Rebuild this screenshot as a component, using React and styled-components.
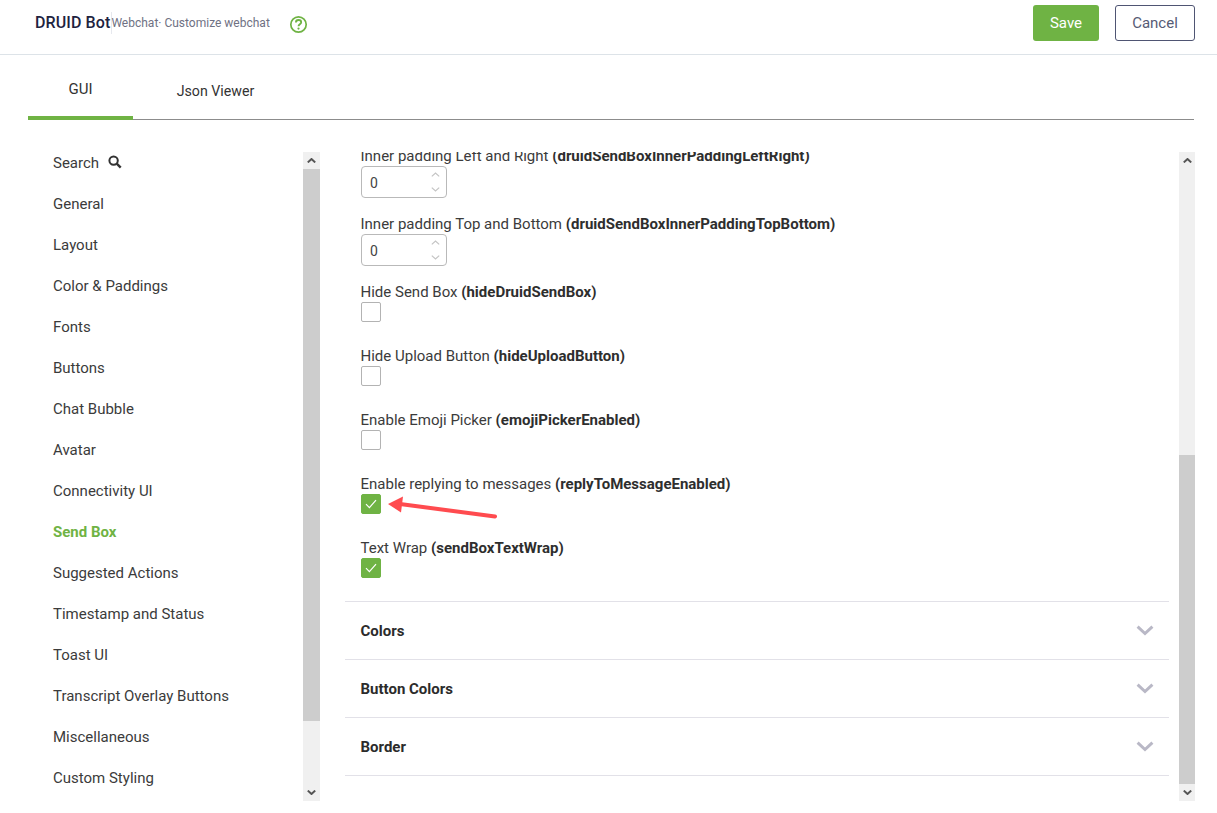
import React from "react";
import styled, { createGlobalStyle } from "styled-components";

const Global = createGlobalStyle`
  html, body { margin: 0; padding: 0; background: #fff; }
  body { font-family: Roboto, "Liberation Sans", sans-serif; overflow: hidden; }
  * { box-sizing: border-box; }
`;
const Page = styled.div`
  width: 1217px; height: 813px; display: flex; flex-direction: column; position: relative; overflow: hidden; color: #333;
`;
const Header = styled.header`
  height: 55px; flex: none; display: flex; align-items: flex-start; border-bottom: 1px solid #dde3e8; padding: 5px 22px 0 35px;
`;
const Brand = styled.div`
  font-size: 16px; font-weight: 500; color: #1e2340; line-height: 36px; width: 76px; white-space: nowrap; letter-spacing: .1px;
`;
const Sub = styled.div`
  font-size: 12px; color: #6f7183; line-height: 36px; border-left: 1px solid #e6e8ee; height: 22px; margin-top: 7px; display: flex; align-items: center; white-space: nowrap; text-indent: -.6px;
`;
const Help = styled.svg`
  width: 19px; height: 19px; margin: 10px 0 0 19px; flex: none;
`;
const Spacer = styled.div`flex: 1;`;
const Save = styled.button`
  width: 66px; height: 36px; border: none; border-radius: 3px; background: #6fb344; color: #fff; font: 400 15px Roboto, sans-serif; padding: 0;
`;
const Cancel = styled.button`
  width: 80px; height: 36px; margin-left: 16px; border: 1px solid #4f5573; border-radius: 3px; background: #fff; color: #565b75; font: 400 15px Roboto, sans-serif; padding: 0;
`;
const Tabs = styled.nav`
  height: 65px; margin: 0 23px 0 28px; flex: none; display: flex; border-bottom: 1px solid #8c8c8c;
`;
const Tab = styled.div`
  height: 65px; width: ${p => p.$w}px; text-align: center; font-size: ${p => p.$active ? 15 : 14.2}px; color: #333;
  line-height: ${p => p.$active ? 68 : 72}px;
  border-bottom: ${p => p.$active ? "4px solid #6fb344" : "none"};
  flex: none;
`;
const Body = styled.div`
  flex: 1; min-height: 0; display: flex; padding: 32px 23px 12px 28px;
`;
const SideWrap = styled.div`
  width: 292px; flex: none; display: flex;
`;
const SideList = styled.ul`
  list-style: none; margin: 0; padding: 0 0 0 25px; flex: 1; min-width: 0;
`;
const SideItem = styled.li`
  height: 41px; line-height: 22px; font-size: 15px; color: ${p => p.$active ? "#6fb344" : "#3b3b3b"}; font-weight: ${p => p.$active ? 700 : 400}; display: flex; gap: 9px; align-items: flex-start; white-space: nowrap;
`;
const SearchIcon = styled.svg`
  width: 14px; height: 14px; margin-top: 3px; flex: none;
`;
const Scroll = styled.div`
  width: ${p => p.$w}px; flex: none; background: #f0f0f0; display: flex; flex-direction: column; height: 649px;
`;
const ScrollBtn = styled.div`
  height: 17px; flex: none; display: flex; align-items: center; justify-content: center;
`;
const ScrollTrack = styled.div`
  flex: 1; min-height: 0; display: flex; flex-direction: column;
`;
const Gap = styled.div`height: ${p => p.$h}px; flex: none;`;
const Thumb = styled.div`height: ${p => p.$h}px; flex: none; background: #cdcdcd;`;
const Main = styled.main`
  width: 824px; margin: 0 10px 0 25px; height: 649px; overflow: hidden; flex: none;
`;
const MainInner = styled.div`margin-top: -5px;`;
const Fields = styled.div`
  padding: 0 0 0 15.5px; height: 455px; border-bottom: 1px solid #e2e1e8;
`;
const Field = styled.div`
  height: ${p => p.$h}px;
`;
const Label = styled.div`
  font-size: 15px; line-height: 18px; color: #3b3b3b; white-space: nowrap;
  b { font-weight: 700; color: #2e2e2e; }
`;
const NumBox = styled.div`
  width: 86px; height: 32px; margin: 1px 0 0 .5px; border: 1px solid #b9b9b9; border-radius: 4px; display: flex; align-items: center; justify-content: space-between; padding: 1px 6px 0 8px; font-size: 14px; color: #444;
`;
const Spin = styled.div`
  display: flex; flex-direction: column; gap: 10px; margin-top: -1px;
`;
const Check = styled.div`
  width: 20px; height: 20px; margin: 1px 0 0 .5px; border-radius: 2px; border: 1px solid ${p => p.$on ? "#6fb344" : "#b3b3b3"}; background: ${p => p.$on ? "#6fb344" : "#fff"}; display: flex; align-items: center; justify-content: center;
`;
const Accordion = styled.div`
  height: 58px; padding: 0 15px 0 15.5px; border-bottom: 1px solid #e2e1e8; display: flex; align-items: center; justify-content: space-between; font-size: 15px; font-weight: 700; color: #2b2b2b;
`;
const Arrow = styled.svg`
  position: absolute; left: 380px; top: 490px; width: 130px; height: 40px; pointer-events: none;
`;

const Up = ({ c = "#555", w = 9, h = 5, sw = 2 }) => (
  <svg width={w} height={h} viewBox="0 0 9 5" fill="none"><path d="M.8 4.4 4.5 1l3.7 3.4" stroke={c} strokeWidth={sw} /></svg>
);
const Down = ({ c = "#555", w = 9, h = 5, sw = 2 }) => (
  <svg width={w} height={h} viewBox="0 0 9 5" fill="none"><path d="M.8.6 4.5 4l3.7-3.4" stroke={c} strokeWidth={sw} /></svg>
);
const Tick = () => (
  <svg width="12" height="10" viewBox="0 0 12 10" fill="none"><path d="M1 5.2 4.4 8.6 11 1.2" stroke="#fff" strokeWidth="1.2" /></svg>
);
const Num = () => (
  <NumBox>
    0
    <Spin><Up c="#c4c4c4" w={9} h={5} sw={1.2} /><Down c="#c4c4c4" w={9} h={5} sw={1.2} /></Spin>
  </NumBox>
);

const nav = ["General","Layout","Color & Paddings","Fonts","Buttons","Chat Bubble","Avatar","Connectivity UI","Send Box","Suggested Actions","Timestamp and Status","Toast UI","Transcript Overlay Buttons","Miscellaneous","Custom Styling"];

export default function App() {
  return (
    <Page>
      <Global />
      <Header>
        <Brand>DRUID Bot</Brand>
        <Sub>Webchat· Customize webchat</Sub>
        <Help viewBox="0 0 19 19" fill="none">
          <circle cx="9.5" cy="9.5" r="7.7" stroke="#6fb344" strokeWidth="1.7" />
          <path d="M6.9 7.4c0-1.5 1.1-2.4 2.6-2.4s2.7.9 2.7 2.3c0 2-2.7 2-2.7 4" stroke="#6fb344" strokeWidth="1.8" />
          <circle cx="9.5" cy="13.6" r="1.1" fill="#6fb344" />
        </Help>
        <Spacer />
        <Save>Save</Save>
        <Cancel>Cancel</Cancel>
      </Header>
      <Tabs>
        <Tab $active $w={105}>GUI</Tab>
        <Tab $w={165}>Json Viewer</Tab>
      </Tabs>
      <Body>
        <SideWrap>
          <SideList>
            <SideItem>Search
              <SearchIcon viewBox="0 0 14 14" fill="none">
                <circle cx="5.6" cy="5.6" r="4.2" stroke="#333" strokeWidth="2" />
                <path d="m8.7 8.7 4 4" stroke="#333" strokeWidth="2.4" />
              </SearchIcon>
            </SideItem>
            {nav.map(n => <SideItem key={n} $active={n === "Send Box"}>{n}</SideItem>)}
          </SideList>
          <Scroll $w={17}>
            <ScrollBtn><Up /></ScrollBtn>
            <ScrollTrack><Thumb $h={552} /></ScrollTrack>
            <ScrollBtn><Down /></ScrollBtn>
          </Scroll>
        </SideWrap>
        <Main>
          <MainInner>
            <Fields>
              <Field $h={68}><Label>Inner padding Left and Right <b>(druidSendBoxInnerPaddingLeftRight)</b></Label><Num /></Field>
              <Field $h={68}><Label>Inner padding Top and Bottom <b>(druidSendBoxInnerPaddingTopBottom)</b></Label><Num /></Field>
              <Field $h={64}><Label>Hide Send Box <b>(hideDruidSendBox)</b></Label><Check /></Field>
              <Field $h={64}><Label>Hide Upload Button <b>(hideUploadButton)</b></Label><Check /></Field>
              <Field $h={64}><Label>Enable Emoji Picker <b>(emojiPickerEnabled)</b></Label><Check /></Field>
              <Field $h={64}><Label>Enable replying to messages <b>(replyToMessageEnabled)</b></Label><Check $on><Tick /></Check></Field>
              <Field $h={50}><Label>Text Wrap <b>(sendBoxTextWrap)</b></Label><Check $on><Tick /></Check></Field>
            </Fields>
            {["Colors","Button Colors","Border"].map(t => (
              <Accordion key={t}>{t}<Down c="#b9b8c6" w={18} h={11} sw={1.5} /></Accordion>
            ))}
          </MainInner>
        </Main>
        <Scroll $w={16}>
          <ScrollBtn><Up /></ScrollBtn>
          <ScrollTrack><Gap $h={286} /><Thumb $h={329} /></ScrollTrack>
          <ScrollBtn><Down /></ScrollBtn>
        </Scroll>
      </Body>
      <Arrow viewBox="0 0 130 40" fill="none">
        <path d="M20 14 115 26.5" stroke="#ff4b4f" strokeWidth="4" strokeLinecap="round" />
        <path d="M8 14 23 6.5 21 22.5Z" fill="#ff4b4f" />
      </Arrow>
    </Page>
  );
}
